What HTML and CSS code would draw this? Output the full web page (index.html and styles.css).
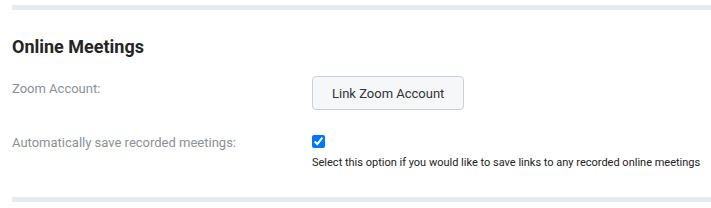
FILE: index.html
```html
<!DOCTYPE html>
<html>
<head>
<meta charset="utf-8">
<link rel="stylesheet" href="styles.css">
</head>
<body>
<div class="page">
  <div class="bar"></div>
  <section class="section">
    <h2 class="title">Online Meetings</h2>
    <div class="row row-first">
      <div class="label label-btn">Zoom Account:</div>
      <div class="field">
        <button class="btn" type="button">Link Zoom Account</button>
      </div>
    </div>
    <div class="row row-second">
      <div class="label">Automatically save recorded meetings:</div>
      <div class="field">
        <input class="check" type="checkbox" checked>
        <div class="help">Select this option if you would like to save links to any recorded online meetings</div>
      </div>
    </div>
  </section>
  <div class="bar bar-bottom"></div>
</div>
</body>
</html>
```
FILE: styles.css
```css
html, body {
  margin: 0;
  padding: 0;
  background: #ffffff;
}
body {
  font-family: Roboto, "Liberation Sans", Arial, sans-serif;
}
.page {
  padding: 5px 0 0 12px;
}
.bar {
  height: 5px;
  background: #e8ebee;
}
.section {
  padding: 0;
}
.title {
  margin: 26px 0 0 0;
  font-size: 18px;
  font-weight: 700;
  line-height: 21px;
  color: #252525;
}
.row {
  display: flex;
  align-items: flex-start;
}
.row-first {
  margin-top: 19px;
}
.row-second {
  margin-top: 25px;
}
.label {
  width: 300px;
  flex: none;
  font-size: 13px;
  line-height: 15px;
  color: #8a9199;
}
.label-btn {
  padding-top: 5px;
}
.field {
  display: flex;
  flex-direction: column;
  align-items: flex-start;
}
.btn {
  height: 34px;
  padding: 0 19px;
  font-family: Roboto, "Liberation Sans", Arial, sans-serif;
  font-size: 13px;
  color: #333333;
  background: #f5f7f9;
  border: 1px solid #c9d0d7;
  border-radius: 4px;
}
.check {
  width: 13px;
  height: 13px;
  margin: 0;
  accent-color: #0075ff;
}
.help {
  margin-top: 8px;
  font-size: 11px;
  line-height: 13px;
  color: #222222;
}
.bar-bottom {
  margin-top: 28px;
}
```
